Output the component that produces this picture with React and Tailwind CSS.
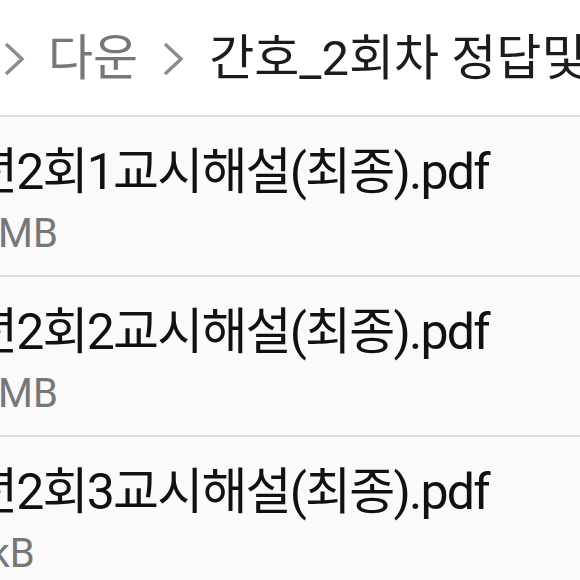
export default function App() {
  const font = { fontFamily: 'Roboto, "Noto Sans CJK KR", sans-serif' };
  const Chevron = () => (
    <svg width="22" height="36" viewBox="0 0 22 36" className="shrink-0">
      <path d="M3 3 L19 18 L3 33" fill="none" stroke="#8c8c8c" strokeWidth="3.5" strokeLinecap="butt" strokeLinejoin="miter" />
    </svg>
  );
  const rows = [
    { name: "년2회1교시해설(최종).pdf", size: "1.93MB", ml: "ml-[-80px]" },
    { name: "년2회2교시해설(최종).pdf", size: "1.51MB", ml: "ml-[-80px]" },
    { name: "년2회3교시해설(최종).pdf", size: "981kB", ml: "ml-[-78px]" },
  ];
  return (
    <div className="w-[580px] h-[580px] overflow-hidden bg-[#fafafa]" style={font}>
      <div className="h-[115px] bg-white flex items-center whitespace-nowrap pl-[3px] pt-[2px]">
        <Chevron />
        <span className="ml-[23px] text-[49px] text-[#777777]">다운</span>
        <span className="ml-[24px]"><Chevron /></span>
        <span className="ml-[25px] text-[49px] text-[#1c1c1c]">간호_2회차 정답및해설</span>
      </div>
      <div className="h-[2px] bg-[#dcdcdc]" />
      {rows.map((r, i) => (
        <div key={i}>
          <div className={`${i === 2 ? "h-[160px]" : "h-[158px]"} flex flex-col whitespace-nowrap`}>
            <div className="mt-[25px] ml-[-28px] text-[50px] leading-[60px] text-[#111111] tracking-[-1.8px]">{r.name}</div>
            <div className="mt-[10px] text-[40px] leading-[44px] text-[#777777] flex">
              <span className={r.ml}>{r.size}</span>
            </div>
          </div>
          {i < 2 && <div className="h-[2px] bg-[#dcdcdc]" />}
        </div>
      ))}
    </div>
  );
}
